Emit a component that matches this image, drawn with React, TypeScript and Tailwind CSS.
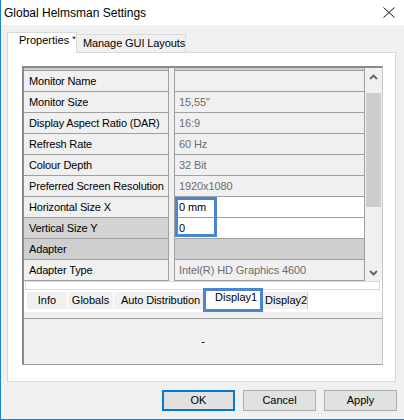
import React from "react";

type RowDef = {
  label: string;
  value: string;
  labelBg: string;
  valueBg: string;
  valueColor: string;
};

const rows: RowDef[] = [
  { label: "Monitor Name", value: "", labelBg: "bg-[#f0f0f0]", valueBg: "bg-[#f0f0f0]", valueColor: "text-[#6d6d6d]" },
  { label: "Monitor Size", value: "15,55\"", labelBg: "bg-[#f0f0f0]", valueBg: "bg-[#f0f0f0]", valueColor: "text-[#6d6d6d]" },
  { label: "Display Aspect Ratio (DAR)", value: "16:9", labelBg: "bg-[#f0f0f0]", valueBg: "bg-[#f0f0f0]", valueColor: "text-[#6d6d6d]" },
  { label: "Refresh Rate", value: "60 Hz", labelBg: "bg-[#f0f0f0]", valueBg: "bg-[#f0f0f0]", valueColor: "text-[#6d6d6d]" },
  { label: "Colour Depth", value: "32 Bit", labelBg: "bg-[#f0f0f0]", valueBg: "bg-[#f0f0f0]", valueColor: "text-[#6d6d6d]" },
  { label: "Preferred Screen Resolution", value: "1920x1080", labelBg: "bg-[#f0f0f0]", valueBg: "bg-[#f0f0f0]", valueColor: "text-[#6d6d6d]" },
  { label: "Horizontal Size X", value: "0 mm", labelBg: "bg-[#f0f0f0]", valueBg: "bg-white", valueColor: "text-black" },
  { label: "Vertical Size Y", value: "0", labelBg: "bg-[#d3d3d3]", valueBg: "bg-white", valueColor: "text-black" },
  { label: "Adapter", value: "", labelBg: "bg-[#cfcfcf]", valueBg: "bg-[#cfcfcf]", valueColor: "text-black" },
  { label: "Adapter Type", value: "Intel(R) HD Graphics 4600", labelBg: "bg-[#f0f0f0]", valueBg: "bg-[#f0f0f0]", valueColor: "text-[#6d6d6d]" },
];

function Chevron({ down }: { down?: boolean }) {
  return (
    <svg width="9" height="6" viewBox="0 0 9 6" className="block">
      <path
        d={down ? "M1 1 L4.5 4.5 L8 1" : "M1 5 L4.5 1.5 L8 5"}
        fill="none"
        stroke="#606060"
        strokeWidth="1.8"
      />
    </svg>
  );
}

function GridRow({ r }: { r: RowDef }) {
  return (
    <div className="flex h-[21px]">
      <div className={`w-[145px] shrink-0 border-r border-b border-[#a0a0a0] pl-[5px] flex items-center text-[11px] tracking-[-0.15px] text-black whitespace-nowrap overflow-hidden ${r.labelBg}`}>
        {r.label}
      </div>
      <div className="w-[5px] shrink-0 bg-[#f0f0f0]" />
      <div className={`flex-1 border-l border-r border-b border-[#a0a0a0] pl-[4px] flex items-center text-[11px] tracking-[-0.1px] whitespace-nowrap ${r.valueBg} ${r.valueColor}`}>
        {r.value}
      </div>
    </div>
  );
}

export default function App() {
  return (
    <div className="w-[404px] h-[420px] bg-[#f0f0f0] border-l border-b border-[#1883d7] flex flex-col overflow-hidden text-black font-['Liberation_Sans',Arial,sans-serif]">
      {/* Title bar */}
      <div className="h-[25px] shrink-0 bg-white flex items-center justify-between pl-[3px] pr-[9px]">
        <span className="text-[12px] leading-[14px]">Global Helmsman Settings</span>
        <svg width="12" height="11" viewBox="0 0 12 11" className="block">
          <path d="M0.5 0.5 L11.5 10.5 M11.5 0.5 L0.5 10.5" stroke="#111" strokeWidth="1" fill="none" />
        </svg>
      </div>

      {/* Body */}
      <div className="flex flex-col pl-[6px] pr-[8px] pt-[7px]">
        {/* Tabs */}
        <div className="flex items-end h-[20px] text-[11px]">
          <div className="relative z-10 -mb-px w-[70px] h-[21px] bg-white border border-b-0 border-[#d9d9d9] pl-[11px] pt-[1px] leading-[13px] whitespace-nowrap">
            Properties <span className="text-[9px] relative -top-[2px]">*</span>
          </div>
          <div className="w-[109px] h-[18px] bg-[#f0f0f0] border border-b-0 border-l-0 border-[#d9d9d9] pl-[6px] pt-[2px] leading-[13px] tracking-[-0.1px] whitespace-nowrap">
            Manage GUI Layouts
          </div>
        </div>

        {/* Panel */}
        <div className="h-[330px] bg-white border border-[#d9d9d9] pt-[13px] pl-[14px] pr-[12px]">
          <div className="h-[299px] border-l-2 border-t-2 border-[#8a8a8a] border-r border-b border-r-[#c8c8c8] border-b-[#a0a0a0] flex flex-col">
            {/* Property grid */}
            <div className="flex h-[213px] shrink-0">
              <div className="relative flex-1 flex flex-col">
                <div className="flex h-[3px]">
                  <div className="w-[145px] shrink-0 bg-[#cdcdcd] border-r border-b border-[#a0a0a0]" />
                  <div className="w-[5px] shrink-0 bg-[#f0f0f0]" />
                  <div className="flex-1 bg-[#cdcdcd] border-l border-r border-b border-[#a0a0a0]" />
                </div>
                {rows.map((r) => (
                  <GridRow key={r.label} r={r} />
                ))}
                <div className="absolute left-[151px] top-[129px] w-[42px] h-[40px] border-[3px] border-[#4a86cf]" />
              </div>
              {/* Scrollbar */}
              <div className="w-[17px] shrink-0 bg-[#f0f0f0] flex flex-col">
                <div className="h-[17px] flex items-center justify-center">
                  <Chevron />
                </div>
                <div className="h-[8px]" />
                <div className="h-[114px] mx-[1px] bg-[#cdcdcd]" />
                <div className="flex-1" />
                <div className="h-[17px] flex items-center justify-center">
                  <Chevron down />
                </div>
              </div>
            </div>

            {/* Horizontal bar + sub tabs */}
            <div className="h-[31px] shrink-0 bg-white flex flex-col">
              <div className="h-[9px] ml-[1px] mr-[2px] border border-[#d9d9d9] bg-white" />
              <div className="mt-[2px] h-[17px] pl-[3px] flex text-[11px] leading-[13px]">
                <div className="w-[41px] bg-[#f0f0f0] border-r border-white flex items-center justify-center">Info</div>
                <div className="w-[46px] bg-[#f0f0f0] border-r border-white flex items-center justify-center">Globals</div>
                <div className="w-[90px] bg-[#f0f0f0] border-r border-white flex items-center justify-center pl-[4px] tracking-[-0.1px] whitespace-nowrap">Auto Distribution</div>
                <div className="relative w-[59px] bg-white pl-[11px] flex items-start whitespace-nowrap">
                  <span className="relative -top-[1px]">Display1</span>
                  <div className="absolute -left-[1px] right-0 -top-[4px] -bottom-[3px] border-[3px] border-[#4a86cf]" />
                </div>
                <div className="w-[45px] bg-[#f0f0f0] border-r border-[#c8c8c8] pl-[2px] flex items-center whitespace-nowrap overflow-hidden">Display2</div>
              </div>
            </div>

            <div className="h-[6px] shrink-0 bg-[#f0f0f0]" />

            {/* Lower panel */}
            <div className="flex-1 border-t border-[#a0a0a0] bg-[#f0f0f0] flex items-center justify-center text-[11px]">
              -
            </div>
          </div>
        </div>
      </div>

      {/* Buttons */}
      <div className="mt-[8px] flex justify-end gap-[8px] pr-[7px] text-[11px]">
        <div className="w-[73px] h-[21px] bg-[#e1e1e1] border-2 border-[#0078d7] flex items-center justify-center">OK</div>
        <div className="w-[73px] h-[21px] bg-[#e1e1e1] border border-[#adadad] flex items-center justify-center">Cancel</div>
        <div className="w-[73px] h-[21px] bg-[#e1e1e1] border border-[#adadad] flex items-center justify-center">Apply</div>
      </div>
    </div>
  );
}
